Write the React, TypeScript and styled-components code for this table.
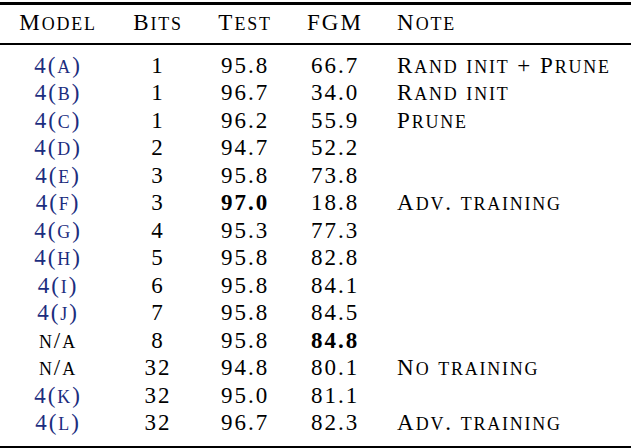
import React from "react";
import styled, { createGlobalStyle } from "styled-components";

const GlobalStyle = createGlobalStyle`
  html, body {
    margin: 0;
    padding: 0;
    background: #fff;
  }
  body {
    font-family: "Liberation Serif", "Times New Roman", serif;
    color: #000;
  }
`;

type Row = {
  model: string;
  linked: boolean;
  bits: number;
  test: string;
  fgm: string;
  note?: string;
  bestTest?: boolean;
  bestFgm?: boolean;
};

const rows: Row[] = [
  { model: "4(a)", linked: true, bits: 1, test: "95.8", fgm: "66.7", note: "Rand init + Prune" },
  { model: "4(b)", linked: true, bits: 1, test: "96.7", fgm: "34.0", note: "Rand init" },
  { model: "4(c)", linked: true, bits: 1, test: "96.2", fgm: "55.9", note: "Prune" },
  { model: "4(d)", linked: true, bits: 2, test: "94.7", fgm: "52.2" },
  { model: "4(e)", linked: true, bits: 3, test: "95.8", fgm: "73.8" },
  { model: "4(f)", linked: true, bits: 3, test: "97.0", fgm: "18.8", note: "Adv. training", bestTest: true },
  { model: "4(g)", linked: true, bits: 4, test: "95.3", fgm: "77.3" },
  { model: "4(h)", linked: true, bits: 5, test: "95.8", fgm: "82.8" },
  { model: "4(i)", linked: true, bits: 6, test: "95.8", fgm: "84.1" },
  { model: "4(j)", linked: true, bits: 7, test: "95.8", fgm: "84.5" },
  { model: "n/a", linked: false, bits: 8, test: "95.8", fgm: "84.8", bestFgm: true },
  { model: "n/a", linked: false, bits: 32, test: "94.8", fgm: "80.1", note: "No training" },
  { model: "4(k)", linked: true, bits: 32, test: "95.0", fgm: "81.1" },
  { model: "4(l)", linked: true, bits: 32, test: "96.7", fgm: "82.3", note: "Adv. training" },
];

//* lowercase letters become small capitals, like \textsc
const SmallCaps: React.FC<{ text: string }> = ({ text }) => {
  const parts = text.match(/[a-z]+|[^a-z]+/g) || [];
  return (
    <>
      {parts.map((part, i) =>
        /[a-z]/.test(part) ? <Sc key={i}>{part.toUpperCase()}</Sc> : <span key={i}>{part}</span>
      )}
    </>
  );
};

const App: React.FC = () => {
  return (
    <>
      <GlobalStyle />
      <Table>
        <colgroup>
          <col style={{ width: 116 }} />
          <col style={{ width: 84 }} />
          <col style={{ width: 90 }} />
          <col style={{ width: 90 }} />
          <col />
        </colgroup>
        <thead>
          <tr>
            <Th>
              <SmallCaps text="Model" />
            </Th>
            <Th>
              <SmallCaps text="Bits" />
            </Th>
            <Th>
              <SmallCaps text="Test" />
            </Th>
            <Th>FGM</Th>
            <Th $left>
              <SmallCaps text="Note" />
            </Th>
          </tr>
        </thead>
        <tbody>
          {rows.map((row, i) => (
            <tr key={i}>
              <Td>
                <Model $linked={row.linked}>
                  <SmallCaps text={row.model} />
                </Model>
              </Td>
              <Td>{row.bits}</Td>
              <Td $bold={row.bestTest}>{row.test}</Td>
              <Td $bold={row.bestFgm}>{row.fgm}</Td>
              <Td $left>{row.note && <SmallCaps text={row.note} />}</Td>
            </tr>
          ))}
        </tbody>
      </Table>
    </>
  );
};

export default App;

const Table = styled.table`
  width: 631px;
  margin: 2px 0 0;
  border-collapse: separate;
  border-spacing: 0;
  table-layout: fixed;
  border-top: 3px solid #000;
  border-bottom: 3px solid #000;
  font-size: 23px;

  tbody tr:first-child td {
    padding-top: 6.5px;
  }
  tbody tr:last-child td {
    padding-bottom: 9.5px;
  }
`;

const Th = styled.th<{ $left?: boolean }>`
  padding: 5px 0 8px;
  padding-left: ${(p) => (p.$left ? "17px" : "0")};
  line-height: 25px;
  font-weight: normal;
  text-align: ${(p) => (p.$left ? "left" : "center")};
  letter-spacing: 2px;
  white-space: nowrap;
  border-bottom: 2px solid #000;
`;

const Td = styled.td<{ $left?: boolean; $bold?: boolean }>`
  padding: 0;
  padding-left: ${(p) => (p.$left ? "17px" : "0")};
  line-height: 27.5px;
  text-align: ${(p) => (p.$left ? "left" : "center")};
  font-weight: ${(p) => (p.$bold ? "bold" : "normal")};
  letter-spacing: 2px;
  white-space: nowrap;
`;

const Sc = styled.span`
  font-size: 0.78em;
  line-height: 1;
  letter-spacing: 1.8px;
`;

const Model = styled.span<{ $linked: boolean }>`
  color: ${(p) => (p.$linked ? "#1c2d7e" : "#000")};
`;
